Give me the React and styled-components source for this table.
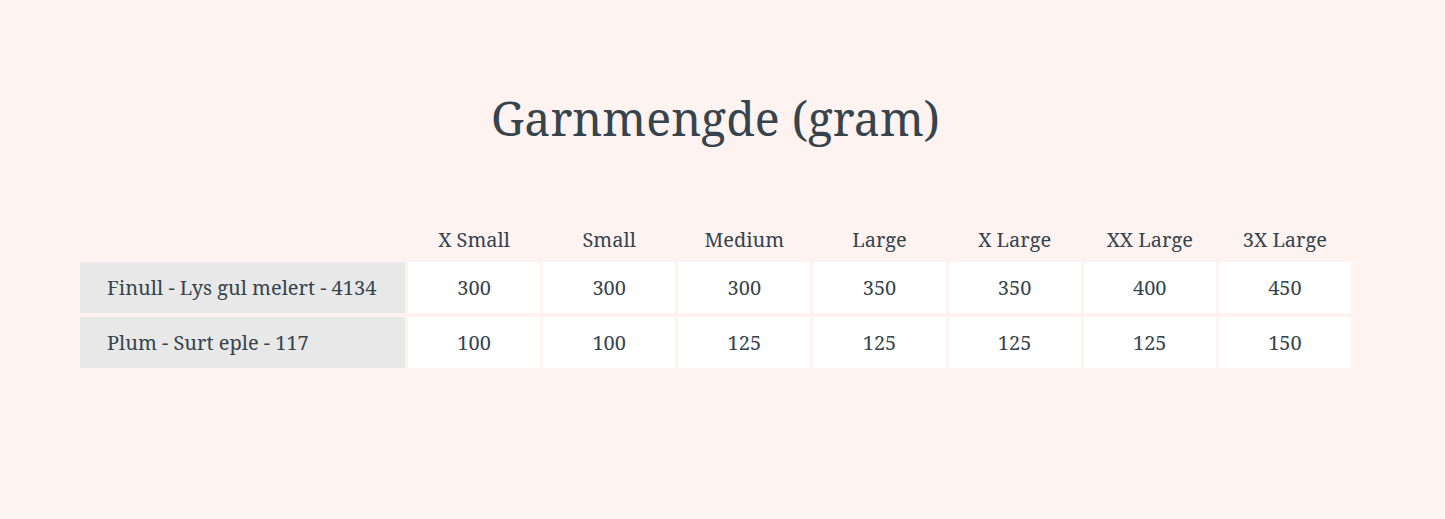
import React from "react";
import styled, { createGlobalStyle } from "styled-components";

const Global = createGlobalStyle`
  html, body { margin: 0; padding: 0; background: #fef3f1; }
  body { font-family: "Noto Serif", "DejaVu Serif", serif; color: #36444d; }
`;

const Page = styled.main`
  width: 1445px;
  height: 519px;
  box-sizing: border-box;
  padding: 88px 94px 0 80px;
  display: flex;
  flex-direction: column;
`;

const Title = styled.h2`
  margin: 0;
  text-align: center;
  font-size: 46.5px;
  font-weight: 400;
  line-height: 60px;
  color: #36444d;
`;

const Grid = styled.div`
  margin-top: 73px;
  display: grid;
  grid-template-columns: 325px repeat(7, 1fr);
  gap: 3px;
`;

const Head = styled.div`
  height: 36px;
  display: flex;
  align-items: center;
  justify-content: center;
  font-size: 20px;
  color: #36444d;
  padding-bottom: 2px;
`;

const Cell = styled.div`
  height: 51px;
  display: flex;
  align-items: center;
  justify-content: ${(p) => (p.$label ? "flex-start" : "center")};
  padding-left: ${(p) => (p.$label ? "27px" : "0")};
  background: ${(p) => (p.$label ? "#e8e8e8" : "#ffffff")};
  font-size: 20px;
  color: #36444d;
  ${(p) => (p.$top ? "margin-bottom: 1px;" : "")}
`;

const sizes = ["X Small", "Small", "Medium", "Large", "X Large", "XX Large", "3X Large"];
const rows = [
  { name: "Finull - Lys gul melert - 4134", values: [300, 300, 300, 350, 350, 400, 450] },
  { name: "Plum - Surt eple - 117", values: [100, 100, 125, 125, 125, 125, 150] },
];

export default function App() {
  return (
    <>
      <Global />
      <Page>
        <Title>Garnmengde (gram)</Title>
        <Grid>
          <Head />
          {sizes.map((s) => (
            <Head key={s}>{s}</Head>
          ))}
          {rows.map((r, i) => (
            <React.Fragment key={r.name}>
              <Cell $label $top={i === 0}>{r.name}</Cell>
              {r.values.map((v, j) => (
                <Cell key={j} $top={i === 0}>{v}</Cell>
              ))}
            </React.Fragment>
          ))}
        </Grid>
      </Page>
    </>
  );
}
